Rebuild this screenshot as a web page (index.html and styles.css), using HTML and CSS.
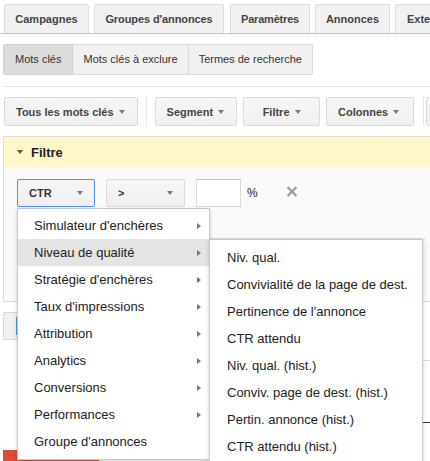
FILE: index.html
```html
<!DOCTYPE html>
<html lang="fr">
<head>
<meta charset="utf-8">
<title>Mots clés</title>
<link rel="stylesheet" href="styles.css">
</head>
<body>
<div class="page">
  <nav class="tabs">
    <span class="tab tab-camp">Campagnes</span>
    <span class="tab tab-grp">Groupes d'annonces</span>
    <span class="tab tab-par">Paramètres</span>
    <span class="tab tab-ann">Annonces</span>
    <span class="tab tab-ext">Extensions</span>
  </nav>

  <div class="seg">
    <span class="seg-btn is-selected">Mots clés</span>
    <span class="seg-btn">Mots clés à exclure</span>
    <span class="seg-btn">Termes de recherche</span>
  </div>

  <div class="rule"></div>

  <div class="toolbar">
    <span class="tbtn">Tous les mots clés <i class="caret"></i></span>
    <span class="vsep"></span>
    <span class="tbtn">Segment <i class="caret"></i></span>
    <span class="tbtn tbtn-wide">Filtre <i class="caret"></i></span>
    <span class="tbtn tbtn-col">Colonnes <i class="caret"></i></span>
    <span class="vsep vsep-r"></span>
    <span class="tbtn tbtn-stub"></span>
  </div>

  <section class="panel">
    <header class="panel-head"><i class="caret caret-dark"></i><span>Filtre</span></header>
    <div class="panel-body">
      <div class="frow">
        <div class="dd-wrap">
          <span class="dd dd-focus"><b>CTR</b><i class="caret"></i></span>
          <div class="menu">
            <div class="mi">Simulateur d'enchères<i class="tri"></i></div>
            <div class="mi is-hover">Niveau de qualité<i class="tri"></i>
              <div class="submenu">
                <div class="si">Niv. qual.</div>
                <div class="si">Convivialité de la page de dest.</div>
                <div class="si">Pertinence de l'annonce</div>
                <div class="si">CTR attendu</div>
                <div class="si">Niv. qual. (hist.)</div>
                <div class="si">Conviv. page de dest. (hist.)</div>
                <div class="si">Pertin. annonce (hist.)</div>
                <div class="si">CTR attendu (hist.)</div>
              </div>
            </div>
            <div class="mi">Stratégie d'enchères<i class="tri"></i></div>
            <div class="mi">Taux d'impressions<i class="tri"></i></div>
            <div class="mi">Attribution<i class="tri"></i></div>
            <div class="mi">Analytics<i class="tri"></i></div>
            <div class="mi">Conversions<i class="tri"></i></div>
            <div class="mi">Performances<i class="tri"></i></div>
            <div class="mi">Groupe d'annonces</div>
          </div>
        </div>
        <span class="dd dd-op"><b>&gt;</b><i class="caret"></i></span>
        <span class="inp"></span>
        <span class="pct">%</span>
        <svg class="close" width="12" height="11" viewBox="0 0 12 11"><path d="M1.5 1 L10.5 10 M10.5 1 L1.5 10" stroke="#9a9a9a" stroke-width="2.2" fill="none"/></svg>
      </div>
      <div class="addbox"><span class="addmark"></span></div>
    </div>
  </section>

  <div class="actions"><span class="abtn"><span class="amark"></span></span></div>

  <div class="grid">
    <div class="grow"></div>
    <div class="grow grow-dark"></div>
  </div>

  <div class="redbtn"></div>
</div>
</body>
</html>
```

FILE: styles.css
```css
html, body {
  margin: 0;
  padding: 0;
  background: #ffffff;
}
body {
  font-family: "Liberation Sans", Arial, sans-serif;
  color: #222;
}
.page {
  width: 430px;
  height: 461px;
  overflow: hidden;
  position: relative;
}

/* Top tabs */
.tabs {
  display: flex;
  gap: 5px;
  padding: 4px 0 0 4px;
  border-bottom: 1px solid #c6c6c6;
  white-space: nowrap;
  overflow: hidden;
}
.tab {
  flex: none;
  box-sizing: border-box;
  height: 29px;
  line-height: 28px;
  text-align: center;
  background: #f1f1f1;
  border: 1px solid #dcdcdc;
  border-bottom: none;
  border-radius: 2px 2px 0 0;
  font-size: 11px;
  font-weight: bold;
  color: #444;
}
.tab-camp { width: 85px; }
.tab-grp { width: 130px; letter-spacing: -0.1px; }
.tab-par { width: 80px; margin-left: 1px; letter-spacing: -0.2px; }
.tab-ann { width: 75px; }
.tab-ext { width: 90px; text-align: left; padding-left: 11px; }

/* Segmented buttons */
.seg {
  display: flex;
  margin: 10px 0 0 3px;
}
.seg-btn {
  height: 29px;
  line-height: 29px;
  padding: 0 10px;
  font-size: 11px;
  color: #333;
  background: #f1f1f1;
  border: 1px solid #dadada;
  border-left: none;
}
.seg-btn:first-child {
  padding: 0 11px;
  border-left: 1px solid #d0d0d0;
  border-radius: 2px 0 0 2px;
}
.seg-btn:last-child { border-radius: 0 2px 2px 0; }
.seg-btn.is-selected {
  background: #dcdcdc;
  border-color: #cfcfcf;
}

.rule {
  margin: 11px 0 0 3px;
  height: 1px;
  background: #e3e3e3;
}

/* Toolbar */
.toolbar {
  display: flex;
  align-items: center;
  margin: 10px 0 0 4px;
  white-space: nowrap;
}
.tbtn {
  flex: none;
  display: flex;
  align-items: center;
  justify-content: center;
  gap: 5px;
  height: 27px;
  padding: 0 12px 0 11px;
  background: linear-gradient(#f6f6f6, #f0f0f0);
  border: 1px solid #dadada;
  border-radius: 2px;
  font-size: 11px;
  font-weight: bold;
  color: #444;
  margin-right: 6px;
}
.tbtn-wide { width: 75px; padding: 0; }
.tbtn-col { padding: 0 14px 0 11px; }
.tbtn-stub { width: 40px; padding: 0; }
.vsep {
  flex: none;
  width: 1px;
  height: 29px;
  background: #e6e6e6;
  margin: 0 8px 0 2px;
}
.vsep-r { margin: 0 2px 0 3px; }

.caret {
  display: inline-block;
  width: 0;
  height: 0;
  border-left: 3.5px solid transparent;
  border-right: 3.5px solid transparent;
  border-top: 4px solid #777;
}
.caret-dark { border-top-color: #555; }

/* Filter panel */
.panel {
  margin: 10px 0 0 3px;
  border: 1px solid #dadada;
  border-right: none;
  background: #fafafa;
}
.panel-head {
  display: flex;
  align-items: center;
  gap: 8px;
  height: 30px;
  padding-left: 13px;
  background: #fff6c9;
  font-size: 13px;
  font-weight: bold;
  color: #222;
}
.panel-body {
  padding: 12px 0 10px 13px;
}
.frow {
  display: flex;
  align-items: center;
  height: 28px;
}
.dd-wrap {
  position: relative;
  height: 28px;
  margin-right: 11px;
}
.dd {
  box-sizing: border-box;
  display: flex;
  align-items: center;
  justify-content: space-between;
  height: 28px;
  padding: 0 11px 0 11px;
  background: linear-gradient(#f6f6f6, #efefef);
  border: 1px solid #dadada;
  border-radius: 2px;
  font-size: 11px;
  color: #333;
}
.dd-focus {
  width: 78px;
  border-color: #4d90fe;
}
.dd-op {
  width: 79px;
  margin-right: 11px;
}
.inp {
  box-sizing: border-box;
  width: 45px;
  height: 28px;
  background: #fff;
  border: 1px solid #d9d9d9;
  border-top-color: #c4c4c4;
}
.pct {
  margin-left: 6px;
  font-size: 12px;
  color: #222;
}
.close {
  margin-left: 28px;
  margin-top: -4px;
}
.addbox {
  box-sizing: border-box;
  margin-top: 31px;
  width: 408px;
  height: 53px;
  border-top: 1px solid #dcdcdc;
}
.addmark {
  display: block;
  margin-top: 24px;
  width: 0;
  height: 27px;
  border-left: 1px solid #4d90fe;
}

/* Dropdown menus (overlay) */
.menu {
  position: absolute;
  top: 29px;
  left: 0;
  z-index: 10;
  box-sizing: border-box;
  width: 193px;
  padding: 3px 0 4px;
  background: #fff;
  border: 1px solid #c8c8c8;
  box-shadow: 0 2px 4px rgba(0,0,0,0.2);
}
.mi {
  position: relative;
  display: flex;
  align-items: center;
  justify-content: space-between;
  height: 27px;
  padding: 0 8px 0 16px;
  font-size: 13px;
  color: #222;
  white-space: nowrap;
}
.mi.is-hover { background: #e4e4e4; }
.tri {
  width: 0;
  height: 0;
  border-top: 3.5px solid transparent;
  border-bottom: 3.5px solid transparent;
  border-left: 4px solid #777;
}
.submenu {
  position: absolute;
  left: 100%;
  top: 0;
  z-index: 11;
  box-sizing: border-box;
  width: 214px;
  padding: 4px 0 4px;
  background: #fff;
  border: 1px solid #c8c8c8;
  box-shadow: 0 2px 4px rgba(0,0,0,0.2);
}
.si {
  height: 27px;
  line-height: 27px;
  padding-left: 17px;
  font-size: 13px;
  color: #222;
  white-space: nowrap;
}

/* Content under the menus */
.actions {
  margin: 10px 0 0 3px;
  display: flex;
}
.abtn {
  display: flex;
  align-items: center;
  width: 80px;
  height: 26px;
  padding-left: 12px;
  background: #f1f1f1;
  border: 1px solid #d6d6d6;
  border-radius: 2px;
}
.amark {
  width: 0;
  height: 18px;
  border-left: 1px solid #4d90fe;
}
.grid {
  margin: 20px 0 0 200px;
}
.grow {
  height: 61px;
  border-top: 1px solid #dcdcdc;
}
.grow-dark {
  height: 0;
  border-top-color: #333;
}
.redbtn {
  margin: 27px 0 0 3px;
  width: 96px;
  height: 22px;
  background: #dd4b39;
}
```
